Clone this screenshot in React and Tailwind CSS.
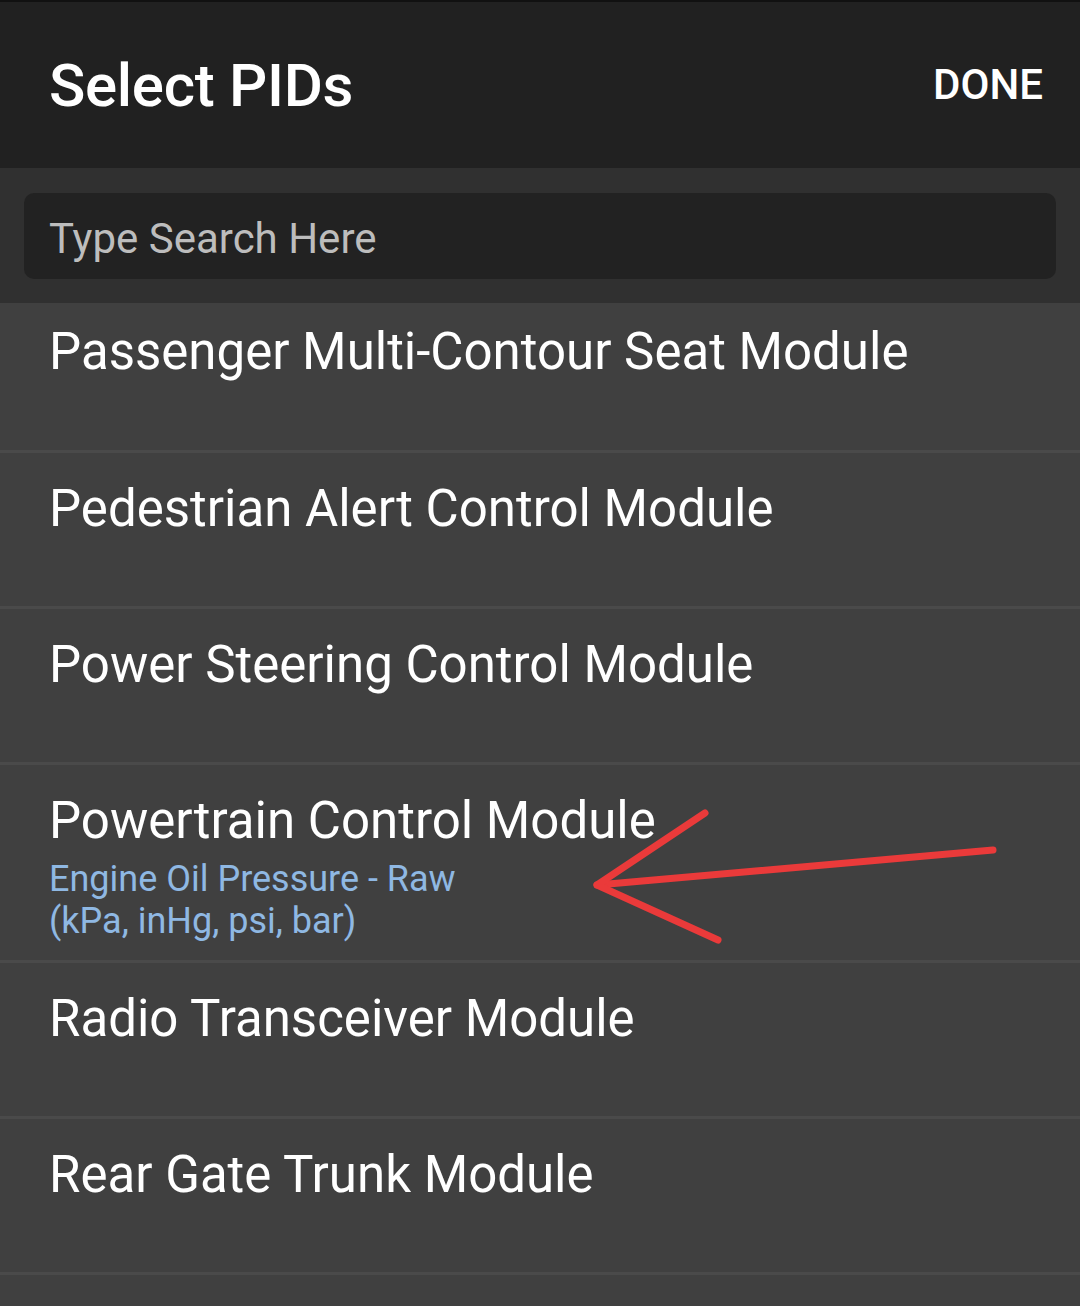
import React from 'react';

const rows = [
  { title: 'Passenger Multi-Contour Seat Module', first: true },
  { title: 'Pedestrian Alert Control Module' },
  { title: 'Power Steering Control Module' },
  { title: 'Powertrain Control Module', sub: ['Engine Oil Pressure - Raw', '(kPa, inHg, psi, bar)'] },
  { title: 'Radio Transceiver Module' },
  { title: 'Rear Gate Trunk Module' },
  { title: '' },
];

export default function App() {
  return (
    <div className="relative w-[1080px] h-[1306px] overflow-hidden bg-[#404040] font-['Roboto',sans-serif]">
      {/* Header */}
      <header className="h-[168px] bg-[#212121] border-t-2 border-[#111] flex items-center justify-between pl-[49px] pr-[37px]">
        <h1 className="text-[60px] font-medium text-white tracking-[-0.3px] mt-[2px]">Select PIDs</h1>
        <button className="text-[42px] font-medium text-white -mt-[2px]">DONE</button>
      </header>

      {/* Search */}
      <div className="bg-[#303030] px-[24px] pt-[25px] pb-[24px]">
        <div className="h-[86px] rounded-[10px] bg-[#222222] flex items-center px-[25px]">
          <span className="text-[42px] text-[#bdbdbd] mt-[4px]">Type Search Here</span>
        </div>
      </div>

      {/* List */}
      <ul>
        {rows.map((r, i) => (
          <li
            key={i}
            className={
              'border-b-[3px] border-[#4a4a4a] pl-[49px] ' +
              (r.first ? 'h-[150px] pt-[19px]' : r.sub ? 'h-[198px] pt-[26px]' : 'h-[156px] pt-[26px]')
            }
          >
            <div className="text-[51px] leading-[60px] text-white">{r.title}</div>
            {r.sub && (
              <div className="mt-[7px] text-[36px] leading-[42px] text-[#8fb8e3]">
                {r.sub.map((s) => (
                  <div key={s}>{s}</div>
                ))}
              </div>
            )}
          </li>
        ))}
      </ul>

      {/* Red arrow annotation */}
      <svg className="absolute left-0 top-0" width="1080" height="1306" viewBox="0 0 1080 1306" fill="none">
        <g stroke="#ea3a3a" strokeWidth="7" strokeLinecap="round" strokeLinejoin="round">
          <path d="M993 850 L597 885" />
          <path d="M705 813 L597 885 L718 940" />
        </g>
      </svg>
    </div>
  );
}
